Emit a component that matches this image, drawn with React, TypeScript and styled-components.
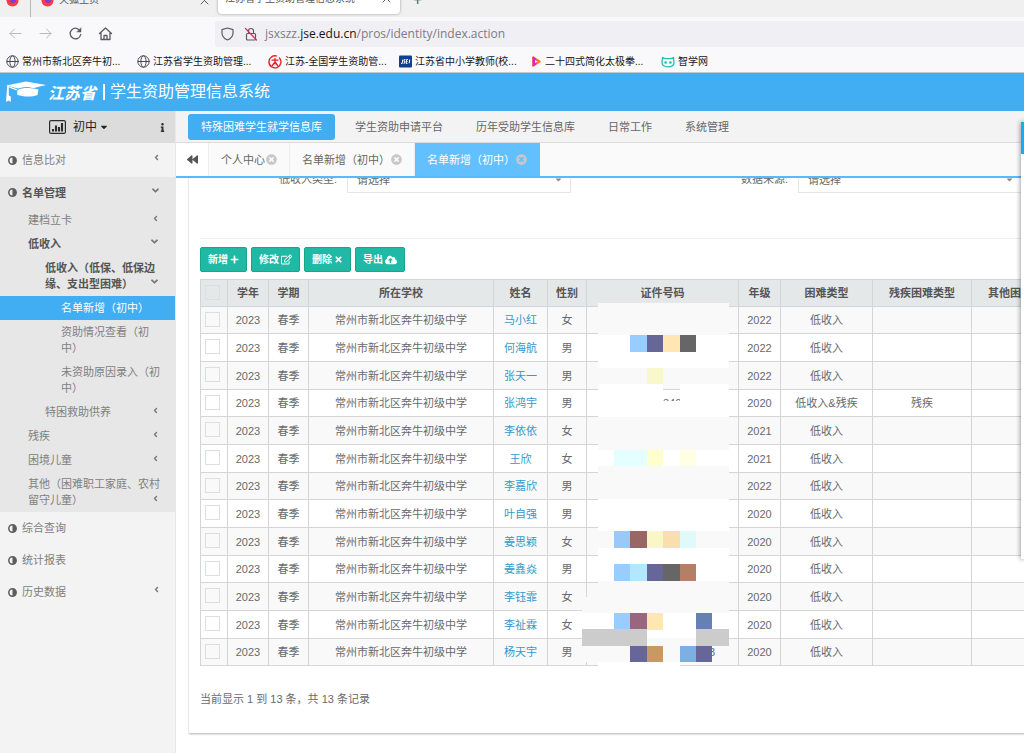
import React from "react";
import styled, { createGlobalStyle, css } from "styled-components";
import {
  FaAngleDown,
  FaAngleLeft,
  FaBackward,
  FaCaretDown,
  FaCloudUploadAlt,
  FaInfo,
  FaPlus,
  FaRegEdit,
  FaTimes,
  FaTimesCircle,
} from "react-icons/fa";

const GlobalStyle = createGlobalStyle`
  * { box-sizing: border-box; }
  html, body { margin: 0; padding: 0; background: #fff; overflow-x: hidden; }
  body, button, input, select {
    font-family: "Liberation Sans", "Noto Sans CJK SC", sans-serif;
    font-size: 11px;
    line-height: 16px;
    color: #676a6c;
  }
  button { border: 0; background: none; padding: 0; cursor: pointer; }
  a { color: inherit; text-decoration: none; }
  svg { display: block; flex: none; }
`;

const Page = styled.div`
  display: flex;
  flex-direction: column;
  min-height: 100vh;
`;

/* ---------- browser chrome ---------- */

const TabStrip = styled.div`
  display: flex;
  align-items: flex-end;
  height: 17px;
  overflow: hidden;
  background: #f0f0f0;
`;

const PinnedTab = styled.div`
  display: flex;
  align-items: center;
  width: 31px;
  height: 34px;
  padding: 0 0 0 6px;
  border-right: 1px solid #b8b8b8;
`;

const BrowserTab = styled.div<{ $active?: boolean }>`
  display: flex;
  align-items: center;
  gap: 5px;
  height: 34px;
  width: ${(p) => (p.$active ? "182px" : "187px")};
  padding: 0 9px 0 ${(p) => (p.$active ? "7px" : "10px")};
  font-size: 10px;
  color: #555;
  ${(p) =>
    p.$active &&
    css`
      height: 31px;
      margin-bottom: 3px;
      background: #fff;
      border-radius: 4px;
      box-shadow: 0 0 3px rgba(0, 0, 0, 0.35);
    `}
  span { flex: 1; white-space: nowrap; }
`;

const NewTab = styled.button`
  height: 34px;
  padding: 0 13px;
  font-size: 16px;
  color: #555;
`;

const AddressRow = styled.div`
  display: flex;
  align-items: center;
  height: 33px;
  background: #f9f9fb;
`;

const NavButtons = styled.div`
  display: flex;
  align-items: center;
  width: 215px;
  gap: 15px;
  padding-left: 8px;
  button { width: 15px; height: 15px; }
`;

const AddressBar = styled.div`
  display: flex;
  flex: 1;
  align-items: center;
  height: 26px;
  padding-left: 6px;
  background: #f0f0f4;
  border-radius: 3px 0 0 3px;
`;

const LockIcon = styled.svg`
  margin-left: 10px;
`;

const Address = styled.div`
  margin-left: 7px;
  font-family: "Open Sans", sans-serif;
  font-size: 12px;
  color: #7b7b84;
  b { font-weight: 400; color: #15141a; }
`;

const Bookmarks = styled.nav`
  display: grid;
  grid-template-columns: repeat(6, 131px);
  align-items: center;
  height: 23px;
  padding: 1px 0 0 6px;
  background: #f9f9fb;
  border-bottom: 1px solid #c3c6cb;
  a {
    display: flex;
    align-items: center;
    gap: 3px;
    font-size: 10px;
    color: #15141a;
    white-space: nowrap;
  }
`;

/* ---------- application frame ---------- */

const Brand = styled.header`
  display: flex;
  align-items: center;
  height: 38px;
  padding-left: 5px;
  background: #41adf2;
  color: #fff;
`;

const Province = styled.span`
  margin-left: 1px;
  font-family: "Noto Sans CJK SC", sans-serif;
  font-size: 16px;
  font-style: italic;
  font-weight: 700;
`;

const BrandTitle = styled.h1`
  margin: 0 0 0 7px;
  padding-left: 5px;
  border-left: 2px solid #fff;
  font-size: 16px;
  font-weight: 400;
  line-height: 16px;
`;

const Body = styled.div`
  display: flex;
  flex: 1;
`;

const Sidebar = styled.aside`
  flex: none;
  width: 176px;
  background: #f3f3f3;
  border-right: 1px solid #e7e7e7;
`;

const StageBar = styled.div`
  display: grid;
  grid-template-columns: 1fr 17px;
  align-items: center;
  height: 32px;
  background: #dcdcdc;
  color: #333;
`;

const StageButton = styled.button`
  display: flex;
  align-items: center;
  justify-content: center;
  color: #222;
  font-size: 12px;
  svg:first-child { margin-right: 7px; }
  svg:last-child { margin-left: 2px; }
`;

const MenuGroup = styled.div<{ $open?: boolean }>`
  background: ${(p) => (p.$open ? "#e7e7e7" : "transparent")};
`;

const TopItem = styled.a<{ $height: number; $bold?: boolean }>`
  display: flex;
  align-items: center;
  gap: 5px;
  height: ${(p) => p.$height}px;
  padding: 0 14px 0 8px;
  color: ${(p) => (p.$bold ? "#555" : "#808080")};
  font-weight: ${(p) => (p.$bold ? 700 : 400)};
  > svg:first-child { color: #5c5c5c; }
  span { flex: 1; }
`;

const Arrow = styled.span`
  && {
    flex: none;
    align-self: end;
    justify-self: end;
    padding-bottom: 5px;
    color: #777;
  }
`;

const TopArrow = styled(Arrow)`
  && { align-self: center; }
`;

const SubItem = styled.a<{ $level: number; $bold?: boolean; $active?: boolean }>`
  display: grid;
  padding: 4px 15px 4px ${(p) => [28, 45, 61][p.$level]}px;
  color: ${(p) => (p.$active ? "#fff" : p.$bold ? "#555" : "#808080")};
  background: ${(p) => (p.$active ? "#41adf2" : "transparent")};
  font-weight: ${(p) => (p.$bold ? 700 : 400)};
  > span { grid-area: 1 / 1; }
`;

const Main = styled.main`
  flex: 1;
  min-width: 0;
`;

const ModuleNav = styled.nav`
  display: flex;
  align-items: center;
  gap: 7px;
  height: 32px;
  padding-left: 12px;
  background: #f3f3f3;
  border-bottom: 1px solid #dcdcdc;
`;

const ModuleLink = styled.a<{ $active?: boolean }>`
  padding: 5px 13px;
  border-radius: 3px;
  background: ${(p) => (p.$active ? "#41adf2" : "transparent")};
  color: ${(p) => (p.$active ? "#fff" : "#666")};
`;

const PageTabs = styled.div`
  display: flex;
  height: 35px;
  background: #fafafa;
  border-bottom: 2px solid #57baff;
`;

const Collapse = styled.button`
  display: flex;
  align-items: center;
  justify-content: center;
  width: 33px;
  background: #fff;
  border-right: 1px solid #eee;
  color: #555;
`;

const PageTab = styled.button<{ $active?: boolean }>`
  display: flex;
  align-items: center;
  gap: 1px;
  padding: 0 12px;
  border-right: 1px solid ${(p) => (p.$active ? "#62c0ff" : "#eee")};
  background: ${(p) => (p.$active ? "#62c0ff" : "transparent")};
  color: ${(p) => (p.$active ? "#fff" : "#666")};
  svg { color: #c8c8c8; }
`;

const Card = styled.section`
  margin: 0 0 20px 12px;
  padding: 0 2px 26px 11px;
  border: solid #e7eaec;
  border-width: 0 0 1px 1px;
  border-bottom-color: #ccc;
  border-radius: 0 0 0 3px;
  box-shadow: 0 1px 1px #ddd;
  overflow: hidden;
`;

const FilterRow = styled.form`
  display: grid;
  grid-template-columns: 137px 224px 1fr 224px;
  column-gap: 10px;
  align-items: end;
  align-content: end;
  height: 15px;
  overflow: hidden;
  label { height: 22px; text-align: right; }
`;

const SelectBox = styled.div`
  display: flex;
  position: relative;
  height: 27px;
  select {
    flex: 1;
    appearance: none;
    padding: 0 0 0 9px;
    border: 1px solid #e5e6e7;
    border-radius: 0;
    background: #fff;
    outline: 0;
  }
  svg {
    position: absolute;
    right: 8px;
    top: 9px;
    color: #888;
  }
`;

const Divider = styled.hr`
  height: 1px;
  margin: 45px 0 8px;
  border: 0;
  background: #eee;
`;

const Toolbar = styled.div`
  display: flex;
  gap: 4px;
  margin-bottom: 7px;
`;

const ActionButton = styled.button`
  display: flex;
  align-items: center;
  gap: 2px;
  height: 25px;
  padding: 0 7px;
  border: 1px solid #18a689;
  border-radius: 2px;
  background: #1fb9a5;
  color: #fff;
  font-size: 10px;
  font-weight: 700;
`;

const TableArea = styled.div`
  position: relative;
`;

const Roster = styled.table`
  width: 870px;
  table-layout: fixed;
  border-collapse: collapse;
  text-align: center;
  th, td {
    padding: 0;
    border: 1px solid #d3d5d6;
    white-space: nowrap;
    line-height: 16px;
  }
  thead tr { height: 27px; background: #e4e8e9; color: #555; }
  tbody tr { height: 28px; }
  tbody tr:nth-child(3n + 1) { height: 27px; }
  tbody tr:nth-child(odd) { background: #f9f9f9; }
  td a { color: #3399cc; }
`;

const Tick = styled.input`
  display: block;
  appearance: none;
  width: 15px;
  height: 15px;
  margin: 0 0 2px 4px;
  border: 1px solid #dcdfe0;
`;

const Mosaic = styled.svg`
  position: absolute;
  left: 381px;
  top: 24px;
`;

const Summary = styled.p`
  margin: 25px 0 0;
`;

const Drawer = styled.div`
  position: fixed;
  right: 0;
  top: 122px;
  width: 3px;
  height: 437px;
  background: #fff;
  box-shadow: 0 0 5px rgba(0, 0, 0, 0.6);
  &::before {
    content: "";
    display: block;
    height: 32px;
    background: #12aef5;
  }
`;

/* ---------- drawings ---------- */

const line = { fill: "none", stroke: "#5b5b66", strokeLinecap: "round", strokeLinejoin: "round" } as const;

const Fox = () => (
  <svg width="13" height="13" viewBox="0 0 13 13">
    <circle cx="6.5" cy="6.5" r="6" fill="#f5394f" />
    <circle cx="7" cy="6" r="3" fill="#7a3fd0" />
    <path d="M1 5c2 1 3 4 6 4 2 0 4-1 5-3-.5 4-3 6-6 6S1 9 1 5z" fill="#ff3a46" />
  </svg>
);

const Cross = () => (
  <svg width="9" height="9" viewBox="0 0 9 9" {...line}>
    <path d="M1 1l7 7M8 1L1 8" />
  </svg>
);

const Globe = () => (
  <svg width="13" height="13" viewBox="0 0 13 13" {...line} stroke="#4a4a55">
    <circle cx="6.5" cy="6.5" r="5.7" />
    <ellipse cx="6.5" cy="6.5" rx="2.6" ry="5.7" />
    <path d="M1 6.5h11" />
  </svg>
);

const AidBadge = () => (
  <svg width="14" height="14" viewBox="0 0 14 14" fill="none" stroke="#e5202e">
    <path d="M9 1.2a6 6 0 1 0 2 1.2" strokeWidth="1.4" />
    <path d="M3.5 5.2h7M7 3v4.5M7 7l-3 4M7 7l3 4M5 8.6h4" strokeWidth="1.3" />
  </svg>
);

const JseBadge = () => (
  <svg width="13" height="13" viewBox="0 0 13 13">
    <rect width="13" height="12" y=".5" rx="1" fill="#10418f" />
    <path d="M2 8.5h1.2l.6-4M6.4 4.5H5.3L5 6.3h1L5.7 8.2H4.5M8.9 4.5H7.7l-.5 4h1.2M7.5 6.5h1M10.2 8.3l.5-3.8" fill="none" stroke="#fff" />
  </svg>
);

const PlayBadge = () => (
  <svg width="12" height="13" viewBox="0 0 12 13">
    <path d="M3 2l7 4.5L3 11z" fill="#ff7a1a" stroke="#ff7a1a" strokeWidth="1.5" strokeLinejoin="round" />
    <path d="M3 2v9l3-2V4z" fill="#e61fd0" stroke="#e61fd0" strokeLinejoin="round" />
    <path d="M5 5l2.5 1.5L5 8z" fill="#fff" />
  </svg>
);

const OwlBadge = () => (
  <svg width="14" height="12" viewBox="0 0 14 12" fill="none" stroke="#20c2b2" strokeWidth="1.3" strokeLinejoin="round">
    <path d="M1.500 1.500C3 3 4.500 2.600 7 2.600S11 3 12.500 1.500L13 6.500C13 9.500 10.500 10.800 7 10.800S1 9.500 1 6.500z" />
    <circle cx="4.600" cy="6.500" r=".7" />
    <circle cx="9.400" cy="6.500" r=".7" />
  </svg>
);

const Cap = () => (
  <svg width="42" height="22" viewBox="0 0 42 22" fill="#fff">
    <path d="M1 4.5L21 .6l20 3.5L28 7.2C23 5.5 18 5.8 13 7.6z" />
    <path d="M12.5 9C18 6.6 24 6.4 33.5 8.6L32.500 14C26 16.400 18 16 12 13.500z" />
    <path d="M2.200 5h1.600v9.500l2 1V21l-2.200-1.400L1 21z" />
    <path d="M3 5l9 3.200-.3 1.200L3 6z" />
  </svg>
);

const StageIcon = () => (
  <svg width="17" height="14" viewBox="0 0 17 14" fill="none" stroke="#2b2b2b">
    <rect x=".6" y=".6" width="15.800" height="12.800" rx="1.500" strokeWidth="1.200" />
    <path d="M4 11.500V9M7 11.500V5.500M10 11.500V7M13 11.500V3" strokeWidth="2.100" />
  </svg>
);

const HalfDisc = () => (
  <svg width="9" height="9" viewBox="0 0 9 9">
    <circle cx="4.500" cy="4.500" r="3.700" fill="none" stroke="currentColor" strokeWidth="1.500" />
    <path d="M4.500 1a3.500 3.500 0 0 1 0 7z" fill="currentColor" />
  </svg>
);

/* Pixelated cover over the ID numbers: x, y, width, height, fill */
const tiles: [number, number, number, number, string][] = [
  [17, 0, 131, 32, "#f9f9f9"],
  [17, 32, 131, 33, "#fff"],
  [17, 65, 131, 16, "#f9f9f9"],
  [17, 81, 65, 33, "#fff"],
  [82, 98, 17, 16, "#fff"],
  [99, 81, 49, 33, "#fff"],
  [17, 114, 131, 33, "#f9f9f9"],
  [17, 147, 131, 16, "#fff"],
  [17, 163, 131, 33, "#f9f9f9"],
  [17, 196, 131, 32, "#fff"],
  [17, 228, 131, 17, "#f9f9f9"],
  [17, 245, 131, 33, "#fff"],
  [17, 278, 131, 32, "#f9f9f9"],
  [1, 294, 16, 16, "#f9f9f9"],
  [1, 310, 147, 25, "#fff"],
  [1, 335, 147, 24, "#f9f9f9"],
  [17, 359, 82, 6, "#fff"],
  [49, 32, 17, 17, "#99ccff"],
  [66, 32, 16, 17, "#666699"],
  [82, 32, 17, 17, "#ffe6b3"],
  [99, 32, 16, 17, "#666666"],
  [66, 65, 16, 16, "#f9f7cc"],
  [33, 147, 33, 16, "#e3ffff"],
  [66, 147, 16, 16, "#ffffcc"],
  [99, 147, 16, 16, "#ffffe3"],
  [33, 228, 16, 17, "#99c9f9"],
  [49, 228, 17, 17, "#996666"],
  [66, 228, 16, 17, "#f9f7c8"],
  [82, 228, 17, 17, "#f9dfae"],
  [99, 228, 16, 17, "#e0f9f9"],
  [33, 261, 16, 17, "#99ccff"],
  [49, 261, 17, 17, "#b3e6ff"],
  [66, 261, 16, 17, "#666699"],
  [82, 261, 17, 17, "#666666"],
  [99, 261, 16, 17, "#b38066"],
  [33, 310, 16, 17, "#99ccff"],
  [49, 310, 17, 17, "#996680"],
  [66, 310, 16, 17, "#ffe6b3"],
  [115, 310, 16, 17, "#6680b3"],
  [1, 326, 65, 17, "#cccccc"],
  [115, 326, 33, 17, "#cccccc"],
  [49, 343, 17, 16, "#666699"],
  [66, 343, 16, 16, "#c99964"],
  [99, 343, 16, 16, "#7eafe3"],
];

const IdMosaic = () => (
  <Mosaic width="149" height="366" viewBox="0 0 149 366" shapeRendering="crispEdges">
    <clipPath id="digits">
      <rect x="82" y="81" width="17" height="17" />
    </clipPath>
    <text x="82" y="104" fontSize="11" fill="#676a6c" clipPath="url(#digits)">340</text>
    {tiles.map(([x, y, w, h, fill], i) => (
      <rect key={i} x={x} y={y} width={w} height={h} fill={fill} />
    ))}
    <text x="128" y="353" fontSize="11" fill="#676a6c">3</text>
    <rect x="115" y="343" width="16" height="16" fill="#666699" />
  </Mosaic>
);

/* ---------- data ---------- */

const school = "常州市新北区奔牛初级中学";
const rows: [string, string, string, string, string][] = [
  ["马小红", "女", "2022", "低收入", ""],
  ["何海航", "男", "2022", "低收入", ""],
  ["张天一", "男", "2022", "低收入", ""],
  ["张鸿宇", "男", "2020", "低收入&残疾", "残疾"],
  ["李依依", "女", "2021", "低收入", ""],
  ["王欣", "女", "2021", "低收入", ""],
  ["李嘉欣", "男", "2022", "低收入", ""],
  ["叶自强", "男", "2020", "低收入", ""],
  ["姜思颖", "女", "2020", "低收入", ""],
  ["姜鑫焱", "男", "2020", "低收入", ""],
  ["李钰霏", "女", "2020", "低收入", ""],
  ["李祉霖", "女", "2020", "低收入", ""],
  ["杨天宇", "男", "2020", "低收入", ""],
];

const columns: [string, number][] = [
  ["学年", 41],
  ["学期", 40],
  ["所在学校", 185],
  ["姓名", 54],
  ["性别", 39],
  ["证件号码", 152],
  ["年级", 42],
  ["困难类型", 92],
  ["残疾困难类型", 99],
  ["其他困难类型", 99],
];

type Sub = { text: string; level: number; arrow?: "left" | "down"; bold?: boolean; active?: boolean };
const subItems: Sub[] = [
  { text: "建档立卡", level: 0, arrow: "left" },
  { text: "低收入", level: 0, arrow: "down", bold: true },
  { text: "低收入（低保、低保边缘、支出型困难）", level: 1, arrow: "down", bold: true },
  { text: "名单新增（初中）", level: 2, active: true },
  { text: "资助情况查看（初中）", level: 2 },
  { text: "未资助原因录入（初中）", level: 2 },
  { text: "特困救助供养", level: 1, arrow: "left" },
  { text: "残疾", level: 0, arrow: "left" },
  { text: "困境儿童", level: 0, arrow: "left" },
  { text: "其他（困难职工家庭、农村留守儿童）", level: 0, arrow: "left" },
];

const bookmarks: [React.ReactNode, string][] = [
  [<Globe />, "常州市新北区奔牛初..."],
  [<Globe />, "江苏省学生资助管理..."],
  [<AidBadge />, "江苏-全国学生资助管..."],
  [<JseBadge />, "江苏省中小学教师(校..."],
  [<PlayBadge />, "二十四式简化太极拳..."],
  [<OwlBadge />, "智学网"],
];

const modules = ["特殊困难学生就学信息库", "学生资助申请平台", "历年受助学生信息库", "日常工作", "系统管理"];

const Chevron = ({ dir }: { dir: "left" | "down" }) =>
  dir === "left" ? <FaAngleLeft size={9} /> : <FaAngleDown size={11} />;

const Filter = ({ id, label }: { id: string; label: string }) => (
  <>
    <label htmlFor={id}>{label}</label>
    <SelectBox>
      <select id={id}>
        <option>请选择</option>
      </select>
      <FaCaretDown size={9} />
    </SelectBox>
  </>
);

export default function App() {
  return (
    <Page>
      <GlobalStyle />
      <TabStrip>
        <PinnedTab><Fox /></PinnedTab>
        <BrowserTab><Fox /><span>火狐主页</span><Cross /></BrowserTab>
        <BrowserTab $active><span>江苏省学生资助管理信息系统</span><Cross /></BrowserTab>
        <NewTab aria-label="新建标签页">+</NewTab>
      </TabStrip>
      <AddressRow>
        <NavButtons>
          <button aria-label="后退">
            <svg width="15" height="15" viewBox="0 0 15 15" {...line} stroke="#b9b9bf"><path d="M13 7.500H2M6.500 3L2 7.500 6.500 12" /></svg>
          </button>
          <button aria-label="前进">
            <svg width="15" height="15" viewBox="0 0 15 15" {...line} stroke="#b9b9bf"><path d="M2 7.500h11M8.500 3L13 7.500 8.500 12" /></svg>
          </button>
          <button aria-label="刷新">
            <svg width="15" height="15" viewBox="0 0 15 15" {...line} strokeWidth="1.300"><path d="M12.300 5.300A5.300 5.300 0 1 0 12.700 8.500" /><path d="M13 2v4H9z" fill="#5b5b66" strokeWidth=".5" /></svg>
          </button>
          <button aria-label="主页">
            <svg width="15" height="15" viewBox="0 0 15 15" {...line} strokeWidth="1.300"><path d="M1.500 7.500l6-5.500 6 5.500M3 6.500v7h9v-7M6 13.500V9.500h3v4" /></svg>
          </button>
        </NavButtons>
        <AddressBar>
          <svg width="13" height="14" viewBox="0 0 13 14" {...line} strokeWidth="1.200"><path d="M6.500 1L12 2.600V6c0 3.500-2.500 5.800-5.500 7C3.500 11.800 1 9.500 1 6V2.600z" /></svg>
          <LockIcon width="14" height="14" viewBox="0 0 14 14" {...line} strokeWidth="1.200">
            <rect x="2.500" y="6.500" width="9" height="6.500" rx="1" />
            <path d="M4.500 6.500V4a2.500 2.500 0 0 1 5 0v2.500" />
            <path d="M1.500 1.500l11 11.500" stroke="#e22850" />
          </LockIcon>
          <Address role="textbox" aria-label="地址">jsxszz.<b>jse.edu.cn</b>/pros/identity/index.action</Address>
        </AddressBar>
      </AddressRow>
      <Bookmarks>
        {bookmarks.map(([icon, text]) => <a key={text} href="#">{icon}{text}</a>)}
      </Bookmarks>
      <Brand>
        <Cap />
        <Province>江苏省</Province>
        <BrandTitle>学生资助管理信息系统</BrandTitle>
      </Brand>
      <Body>
        <Sidebar>
          <StageBar>
            <StageButton><StageIcon />初中<FaCaretDown size={10} /></StageButton>
            <FaInfo size={9} />
          </StageBar>
          <MenuGroup>
            <TopItem href="#" $height={34}>
              <HalfDisc /><span>信息比对</span><TopArrow><Chevron dir="left" /></TopArrow>
            </TopItem>
          </MenuGroup>
          <MenuGroup $open>
            <TopItem href="#" $height={31} $bold>
              <HalfDisc /><span>名单管理</span><TopArrow><Chevron dir="down" /></TopArrow>
            </TopItem>
            {subItems.map((s) => (
              <SubItem key={s.text} href="#" $level={s.level} $bold={s.bold} $active={s.active}>
                <span>{s.text}</span>
                {s.arrow && <Arrow><Chevron dir={s.arrow} /></Arrow>}
              </SubItem>
            ))}
          </MenuGroup>
          <MenuGroup>
            <TopItem href="#" $height={32}><HalfDisc /><span>综合查询</span></TopItem>
            <TopItem href="#" $height={32}><HalfDisc /><span>统计报表</span></TopItem>
            <TopItem href="#" $height={32}>
              <HalfDisc /><span>历史数据</span><TopArrow><Chevron dir="left" /></TopArrow>
            </TopItem>
          </MenuGroup>
        </Sidebar>
        <Main>
          <ModuleNav>
            {modules.map((m, i) => <ModuleLink key={m} href="#" $active={i === 0}>{m}</ModuleLink>)}
          </ModuleNav>
          <PageTabs>
            <Collapse aria-label="向左滚动"><FaBackward size={11} /></Collapse>
            <PageTab>个人中心<FaTimesCircle size={11} /></PageTab>
            <PageTab>名单新增（初中）<FaTimesCircle size={11} /></PageTab>
            <PageTab $active>名单新增（初中）<FaTimesCircle size={11} /></PageTab>
          </PageTabs>
          <Card>
            <FilterRow>
              <Filter id="kind" label="低收入类型:" />
              <Filter id="source" label="数据来源:" />
            </FilterRow>
            <Divider />
            <Toolbar>
              <ActionButton>新增<FaPlus size={9} /></ActionButton>
              <ActionButton>修改<FaRegEdit size={11} /></ActionButton>
              <ActionButton>删除<FaTimes size={9} /></ActionButton>
              <ActionButton>导出<FaCloudUploadAlt size={12} /></ActionButton>
            </Toolbar>
            <TableArea>
              <Roster>
                <colgroup>
                  <col width={27} />
                  {columns.map(([name, width]) => <col key={name} width={width} />)}
                </colgroup>
                <thead>
                  <tr>
                    <th><Tick type="checkbox" aria-label="全选" /></th>
                    {columns.map(([name]) => <th key={name}>{name}</th>)}
                  </tr>
                </thead>
                <tbody>
                  {rows.map(([name, sex, grade, kind, disability]) => (
                    <tr key={name}>
                      <td><Tick type="checkbox" aria-label={name} /></td>
                      <td>2023</td>
                      <td>春季</td>
                      <td>{school}</td>
                      <td><a href="#">{name}</a></td>
                      <td>{sex}</td>
                      <td />
                      <td>{grade}</td>
                      <td>{kind}</td>
                      <td>{disability}</td>
                      <td />
                    </tr>
                  ))}
                </tbody>
              </Roster>
              <IdMosaic />
            </TableArea>
            <Summary>当前显示 1 到 13 条，共 13 条记录</Summary>
          </Card>
        </Main>
      </Body>
      <Drawer />
    </Page>
  );
}
